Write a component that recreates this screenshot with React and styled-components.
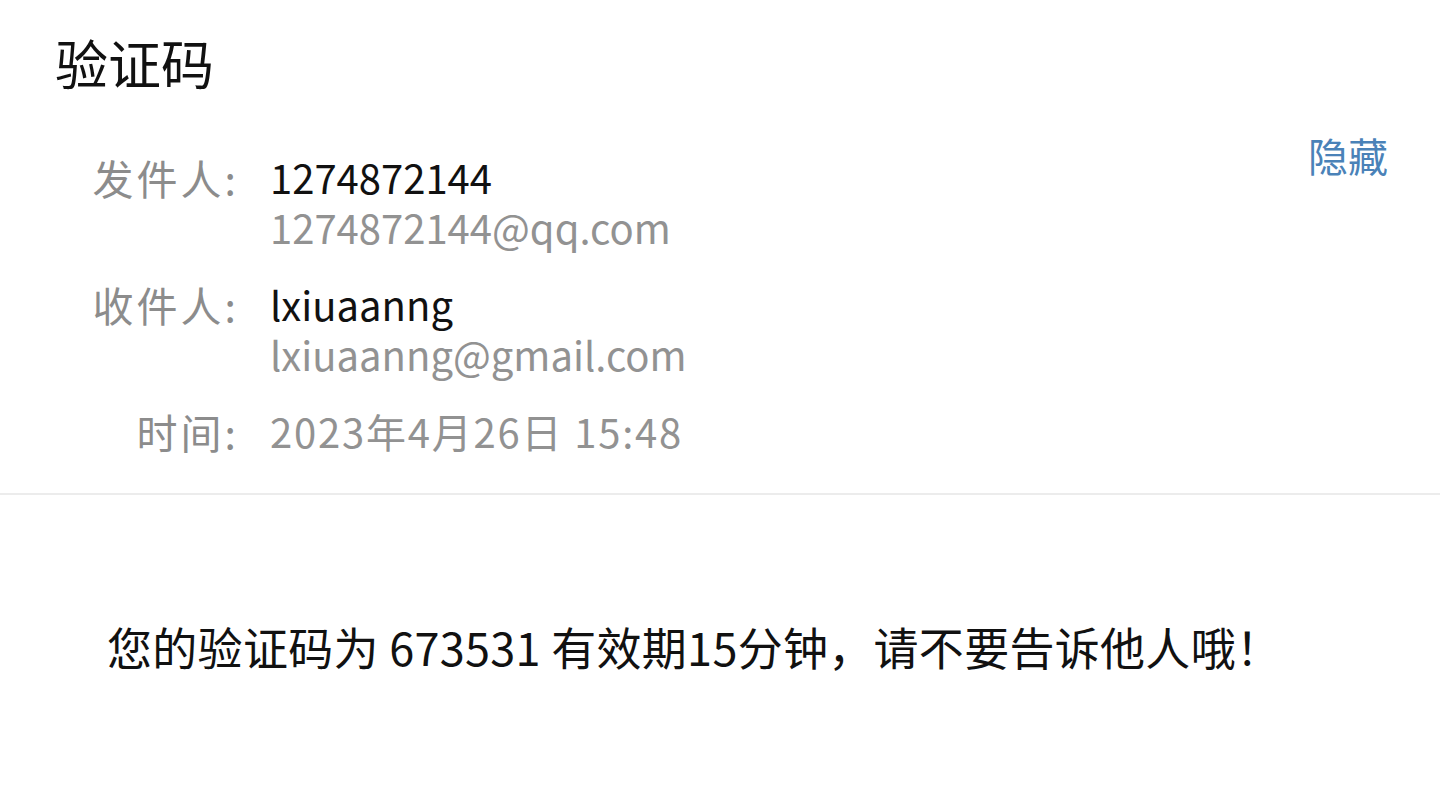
import styled, { createGlobalStyle } from "styled-components";

const GlobalStyle = createGlobalStyle`
  html, body {
    margin: 0;
    padding: 0;
    background: #ffffff;
    font-family: "Noto Sans CJK SC", "Noto Sans", sans-serif;
  }
`;

const headerRows = [
  { label: "发件人:", main: "1274872144", sub: "1274872144@qq.com" },
  { label: "收件人:", main: "lxiuaanng", sub: "lxiuaanng@gmail.com" },
  { label: "时间:", sub: "2023年4月26日 15:48", spacing: 1.8 },
];

const App = () => {
  return (
    <Page>
      <GlobalStyle />
      <Title>验证码</Title>
      <Header>
        <Details>
          {headerRows.map((row, index) => (
            <Row key={index}>
              <Label>{row.label}</Label>
              <Values>
                {row.main && <MainValue>{row.main}</MainValue>}
                <SubValue $spacing={row.spacing}>{row.sub}</SubValue>
              </Values>
            </Row>
          ))}
        </Details>
        <HideButton>隐藏</HideButton>
      </Header>
      <Divider />
      <Body>您的验证码为 673531 有效期15分钟，请不要告诉他人哦！</Body>
    </Page>
  );
};

const Page = styled.div`
  width: 1440px;
  height: 804px;
  overflow: hidden;
  background: #fff;
`;

const Title = styled.h1`
  margin: 0;
  padding: 26px 0 0 55px;
  font-size: 53px;
  font-weight: 400;
  line-height: 72px;
  color: #111;
`;

const Header = styled.div`
  display: flex;
  justify-content: space-between;
  align-items: flex-start;
  padding: 32px 52px 0 90px;
`;

const Details = styled.div`
  display: flex;
  flex-direction: column;
  gap: 27px;
  margin-top: 22px;
`;

const Row = styled.div`
  display: grid;
  grid-template-columns: 182px 1fr;
  align-items: start;
`;

const Label = styled.div`
  text-align: right;
  font-size: 41px;
  letter-spacing: 3px;
  line-height: 50px;
  color: #8c8c8c;
  padding-right: 33px;
`;

const Values = styled.div`
  display: flex;
  flex-direction: column;
`;

const MainValue = styled.div`
  font-size: 40px;
  line-height: 50px;
  color: #111;
  margin-left: -2px;
`;

const SubValue = styled.div`
  font-size: 40px;
  line-height: 50px;
  color: #929292;
  margin-left: -2px;
  letter-spacing: ${(p) => p.$spacing || 0}px;
`;

const HideButton = styled.button`
  border: none;
  background: none;
  padding: 0;
  font-family: inherit;
  font-size: 40px;
  line-height: 50px;
  color: #4a82b8;
  cursor: pointer;
`;

const Divider = styled.hr`
  margin: 37px 0 0 0;
  border: none;
  height: 2px;
  background: #ececec;
`;

const Body = styled.p`
  margin: 0;
  padding: 122px 0 0 107px;
  font-size: 45px;
  letter-spacing: 0.3px;
  line-height: 60px;
  color: #111;
`;

export default App;
